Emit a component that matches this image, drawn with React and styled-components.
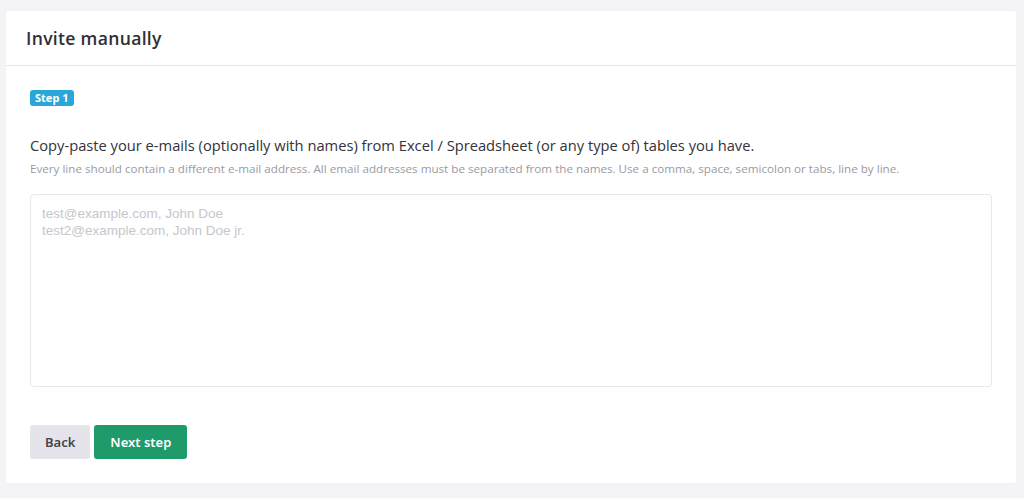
import React from 'react';
import styled, { createGlobalStyle } from 'styled-components';

const GlobalStyle = createGlobalStyle`
    html, body {
        margin: 0;
        padding: 0;
        background-color: #f4f4f6;
    }
    body {
        font-family: "Open Sans", "Noto Sans", sans-serif;
    }
`;

const Page = styled.div`
    padding: 11px 8px 15px 6px;
`;

const Card = styled.div`
    background-color: #fff;
    border-radius: 3px;
    height: 472px;
    display: flex;
    flex-direction: column;
`;

const Header = styled.div`
    height: 54px;
    display: flex;
    align-items: center;
    padding: 0 20px;
    border-bottom: 1px solid #e6e6ea;
`;

const Title = styled.h2`
    margin: 0;
    font-family: "Open Sans", sans-serif;
    font-size: 17.6px;
    font-weight: 600;
    color: #2f2f36;
    letter-spacing: 0.3px;
`;

const Body = styled.div`
    flex: 1;
    padding: 24px 24px 24px 24px;
    display: flex;
    flex-direction: column;
`;

const Badge = styled.span`
    align-self: flex-start;
    background-color: #2aa7d9;
    color: #fff;
    font-family: "Noto Sans", sans-serif;
    font-size: 11px;
    font-weight: 700;
    line-height: 16px;
    padding: 0 5px;
    border-radius: 3px;
`;

const Heading = styled.p`
    margin: 29px 0 0;
    font-size: 14.7px;
    color: #33333a;
    line-height: 20px;
`;

const Hint = styled.p`
    margin: 6px 0 0;
    font-size: 11.65px;
    color: #9a9aa2;
    line-height: 16px;
`;

const TextArea = styled.textarea`
    margin-top: 17px;
    height: 193px;
    box-sizing: border-box;
    width: 962px;
    border: 1px solid #e8e8ec;
    border-radius: 4px;
    padding: 10px 11px;
    font-family: "Liberation Sans", Arial, sans-serif;
    font-size: 13.5px;
    line-height: 17px;
    resize: none;
    outline: none;
    &::placeholder {
        color: #c6c6cc;
    }
`;

const Actions = styled.div`
    margin-top: auto;
    display: flex;
    gap: 4px;
`;

const Button = styled.button`
    height: 34px;
    padding: 0 ${p => (p.primary ? '16px' : '15px')};
    border: none;
    border-radius: 3px;
    font-family: "Noto Sans", sans-serif;
    font-size: 13px;
    font-weight: 600;
    background-color: ${p => (p.primary ? '#1e9a6b' : '#e4e4ea')};
    color: ${p => (p.primary ? '#fff' : '#45454d')};
    cursor: pointer;
`;

const App = () => {
    return <>
        <GlobalStyle />
        <Page>
            <Card>
                <Header>
                    <Title>Invite manually</Title>
                </Header>
                <Body>
                    <Badge>Step 1</Badge>
                    <Heading>Copy-paste your e-mails (optionally with names) from Excel / Spreadsheet (or any type of) tables you have.</Heading>
                    <Hint>Every line should contain a different e-mail address. All email addresses must be separated from the names. Use a comma, space, semicolon or tabs, line by line.</Hint>
                    <TextArea placeholder={'test@example.com, John Doe\ntest2@example.com, John Doe jr.'} />
                    <Actions>
                        <Button>Back</Button>
                        <Button primary>Next step</Button>
                    </Actions>
                </Body>
            </Card>
        </Page>
    </>;
};

export default App;
